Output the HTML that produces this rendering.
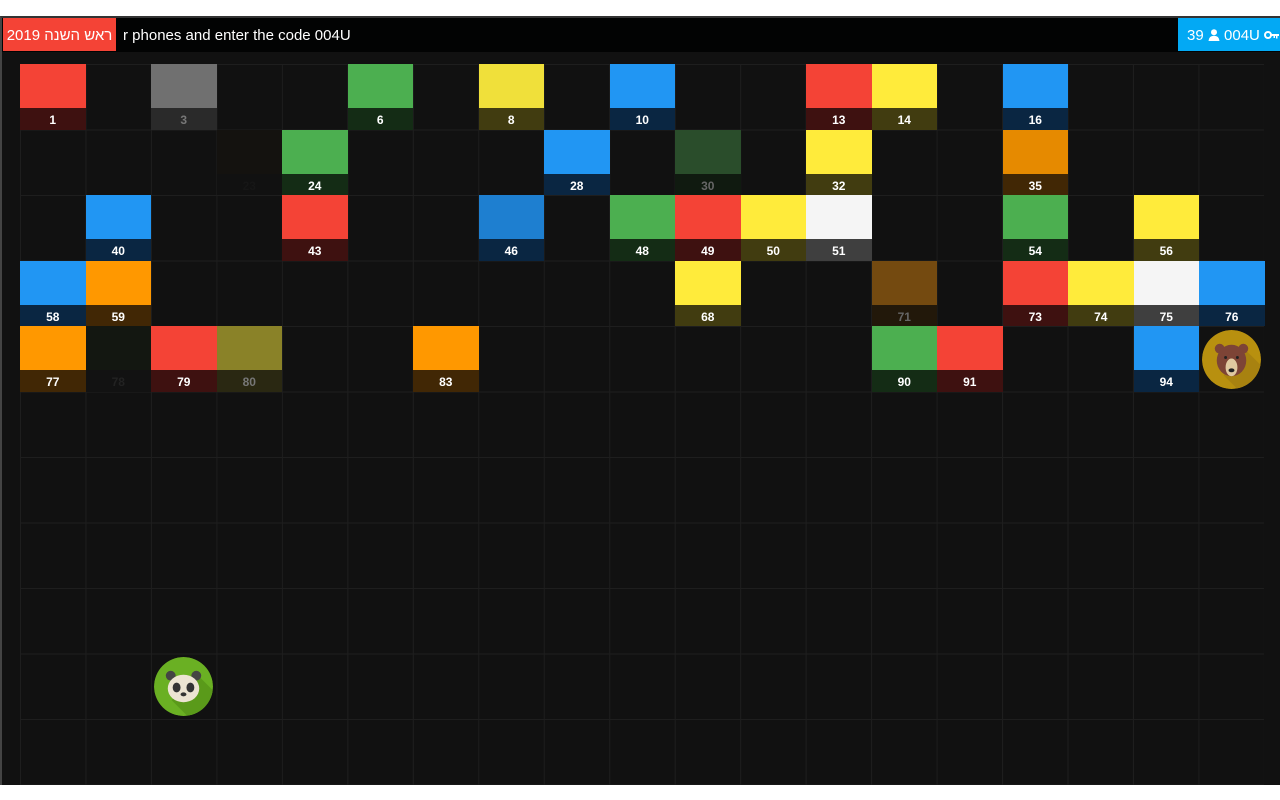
<!DOCTYPE html>
<html><head><meta charset="utf-8"><style>
*{margin:0;padding:0;box-sizing:border-box}
body{width:1280px;height:800px;background:#fff;font-family:"Liberation Sans","DejaVu Sans",sans-serif;position:relative;overflow:hidden}
#frame{position:absolute;left:0;top:16px;width:1280px;height:769px;background:#111;border-left:2px solid #444;border-top:2px solid #333}
#bar{position:absolute;left:2px;top:18px;width:1278px;height:34px;background:#020303}
#title{position:absolute;left:3px;top:18px;width:113px;height:33px;background:#f44336;color:#fff;font-size:15px;line-height:35px;text-align:center}
#msg{position:absolute;left:123px;top:18px;height:33px;line-height:35px;color:#fff;font-size:15px}
#acct{position:absolute;left:1178px;top:18px;width:102px;height:33px;background:#03a9f4;color:#fff;font-size:15px;line-height:35px;padding-left:9px;white-space:nowrap}
#grid{position:absolute;left:20px;top:64px;width:1244px;height:721px;
background-image:linear-gradient(to right,#1e1e1e 1px,transparent 1px),linear-gradient(to bottom,#1e1e1e 1px,transparent 1px);
background-size:65.47px 65.5px}
.c{position:absolute;width:65.5px;height:65.5px}
.c .t{position:absolute;left:0;top:0;width:100%;height:44px}
.c .b{position:absolute;left:0;top:44px;width:100%;height:21.5px;color:#fff;font-size:12px;font-weight:bold;text-align:center;line-height:24px}
.R .t{background:#f44336}.R .b{background:#3e1110}
.Y .t{background:#ffeb3b}.Y .b{background:#413c10}
.G .t{background:#4caf50}.G .b{background:#142c15}
.B .t{background:#2196f3}.B .b{background:#0a2642}
.O .t{background:#ff9800}.O .b{background:#412705}
.W .t{background:#f5f5f5}.W .b{background:#3f3f3f}
.f .b{color:#777}
.av{position:absolute;width:59px;height:59px;border-radius:50%}
</style></head><body>
<div id="frame"></div>
<div id="bar"></div>
<div id="title">2019 ראש השנה</div>
<div id="msg">r phones and enter the code 004U</div>
<div id="acct">39 <svg width="12" height="12" viewBox="0 0 12 12" style="vertical-align:-1px"><circle cx="6" cy="3.3" r="3" fill="#fff"/><path d="M0.5 12 Q1 6.8 6 6.8 Q11 6.8 11.5 12Z" fill="#fff"/></svg> 004U <svg width="16" height="10" viewBox="0 0 16 10" style="vertical-align:0"><circle cx="4" cy="5" r="3" fill="none" stroke="#fff" stroke-width="2"/><path d="M7 4h8v2h-1.5v2.5h-1.5V6h-1v2h-1.5V6H7z" fill="#fff"/></svg></div>
<div id="grid">
<div class="c R" style="left:0;top:0"><div class="t"></div><div class="b">1</div></div>
<div class="c f" style="left:131px;top:0"><div class="t" style="background:#707070"></div><div class="b" style="background:#2a2a2a">3</div></div>
<div class="c G" style="left:327.5px;top:0"><div class="t"></div><div class="b">6</div></div>
<div class="c Y" style="left:458.5px;top:0"><div class="t" style="background:#f0e03a"></div><div class="b">8</div></div>
<div class="c B" style="left:589.5px;top:0"><div class="t"></div><div class="b">10</div></div>
<div class="c R" style="left:786px;top:0"><div class="t"></div><div class="b">13</div></div>
<div class="c Y" style="left:851.5px;top:0"><div class="t"></div><div class="b">14</div></div>
<div class="c B" style="left:982.5px;top:0"><div class="t"></div><div class="b">16</div></div>

<div class="c f" style="left:196.5px;top:65.5px"><div class="t" style="background:#14120f"></div><div class="b" style="background:#111;color:#161616">23</div></div>
<div class="c G" style="left:262px;top:65.5px"><div class="t"></div><div class="b">24</div></div>
<div class="c B" style="left:524px;top:65.5px"><div class="t"></div><div class="b">28</div></div>
<div class="c f" style="left:655px;top:65.5px"><div class="t" style="background:#2a4d2b"></div><div class="b" style="background:#101a10;color:#666">30</div></div>
<div class="c Y" style="left:786px;top:65.5px"><div class="t"></div><div class="b">32</div></div>
<div class="c O" style="left:982.5px;top:65.5px"><div class="t" style="background:#e68a00"></div><div class="b">35</div></div>

<div class="c B" style="left:65.5px;top:131px"><div class="t"></div><div class="b">40</div></div>
<div class="c R" style="left:262px;top:131px"><div class="t"></div><div class="b">43</div></div>
<div class="c B" style="left:458.5px;top:131px"><div class="t" style="background:#1e7fd0"></div><div class="b">46</div></div>
<div class="c G" style="left:589.5px;top:131px"><div class="t"></div><div class="b">48</div></div>
<div class="c R" style="left:655px;top:131px"><div class="t"></div><div class="b">49</div></div>
<div class="c Y" style="left:720.5px;top:131px"><div class="t"></div><div class="b">50</div></div>
<div class="c W" style="left:786px;top:131px"><div class="t"></div><div class="b">51</div></div>
<div class="c G" style="left:982.5px;top:131px"><div class="t"></div><div class="b">54</div></div>
<div class="c Y" style="left:1113.5px;top:131px"><div class="t"></div><div class="b">56</div></div>

<div class="c B" style="left:0;top:196.5px"><div class="t"></div><div class="b">58</div></div>
<div class="c O" style="left:65.5px;top:196.5px"><div class="t"></div><div class="b">59</div></div>
<div class="c Y" style="left:655px;top:196.5px"><div class="t"></div><div class="b">68</div></div>
<div class="c f" style="left:851.5px;top:196.5px"><div class="t" style="background:#744a10"></div><div class="b" style="background:#22180a;color:#666">71</div></div>
<div class="c R" style="left:982.5px;top:196.5px"><div class="t"></div><div class="b">73</div></div>
<div class="c Y" style="left:1048px;top:196.5px"><div class="t"></div><div class="b">74</div></div>
<div class="c W" style="left:1113.5px;top:196.5px"><div class="t"></div><div class="b">75</div></div>
<div class="c B" style="left:1179px;top:196.5px"><div class="t"></div><div class="b">76</div></div>

<div class="c O" style="left:0;top:262px"><div class="t"></div><div class="b">77</div></div>
<div class="c f" style="left:65.5px;top:262px"><div class="t" style="background:#131711"></div><div class="b" style="background:#121212;color:#222">78</div></div>
<div class="c R" style="left:131px;top:262px"><div class="t"></div><div class="b">79</div></div>
<div class="c f" style="left:196.5px;top:262px"><div class="t" style="background:#8a8228"></div><div class="b" style="background:#2a2812;color:#777">80</div></div>
<div class="c O" style="left:393px;top:262px"><div class="t"></div><div class="b">83</div></div>
<div class="c G" style="left:851.5px;top:262px"><div class="t"></div><div class="b">90</div></div>
<div class="c R" style="left:917px;top:262px"><div class="t"></div><div class="b">91</div></div>
<div class="c B" style="left:1113.5px;top:262px"><div class="t"></div><div class="b">94</div></div>

<svg class="av" style="left:1182px;top:266px" viewBox="0 0 60 60"><circle cx="30" cy="30" r="30" fill="#b8900f"/><path d="M42 18 L60 36 A30 30 0 0 1 36 60 L22 46Z" fill="#a88210"/><circle cx="18" cy="19" r="5" fill="#7d4436"/><circle cx="42" cy="19" r="5" fill="#7d4436"/><ellipse cx="30" cy="31" rx="15" ry="16" fill="#7d4436"/><ellipse cx="30" cy="38" rx="6" ry="9" fill="#e0c9a0"/><ellipse cx="30" cy="41" rx="3" ry="2" fill="#222"/><circle cx="24" cy="28" r="1.5" fill="#222"/><circle cx="36" cy="28" r="1.5" fill="#222"/></svg>
<svg class="av" style="left:134px;top:593px" viewBox="0 0 60 60"><circle cx="30" cy="30" r="30" fill="#6ab023"/><path d="M42 16 L60 34 A30 30 0 0 1 34 60 L18 44Z" fill="#5a9a1a"/><circle cx="17" cy="19" r="5" fill="#444"/><circle cx="43" cy="19" r="5" fill="#444"/><ellipse cx="30" cy="32" rx="16" ry="14" fill="#ece4d2"/><ellipse cx="23" cy="31" rx="4" ry="5" fill="#333"/><ellipse cx="37" cy="31" rx="4" ry="5" fill="#333"/><ellipse cx="30" cy="38" rx="3" ry="2" fill="#333"/></svg>
</div>
</body></html>
